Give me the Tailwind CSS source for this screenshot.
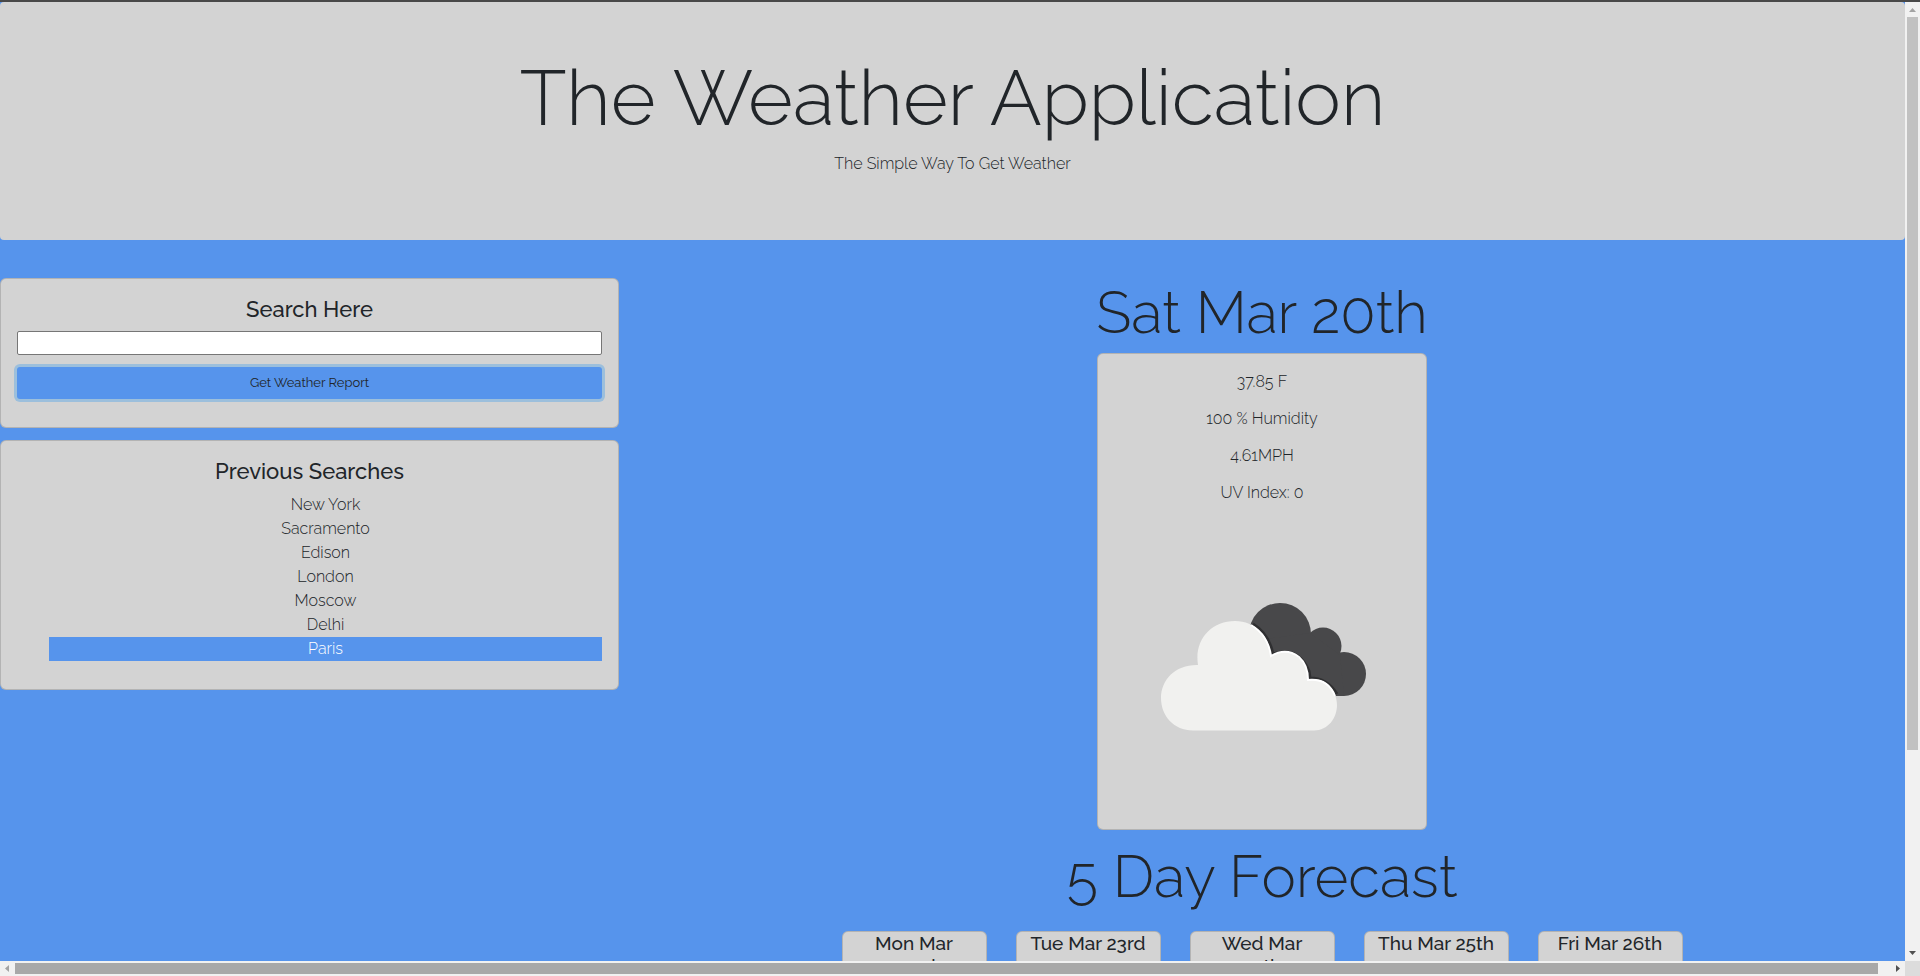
<!DOCTYPE html>
<html lang="en">
<head>
<meta charset="utf-8">
<title>The Weather Application</title>
<script src="https://cdn.jsdelivr.net/npm/@tailwindcss/browser@4"></script>
</head>
<body class="flex h-screen flex-col overflow-hidden bg-[#5694ec] font-['Raleway','Lato',sans-serif] text-base font-light text-[#212529]">
  <div class="flex min-h-0 flex-1">
    <div class="min-w-0 flex-1 overflow-hidden">
      <div class="h-0.5 bg-[#484848]"></div>
      <header class="rounded-sm bg-[#d3d3d3] px-8 pt-12 pb-16 text-center">
        <h1 class="text-[77px] leading-24">The Weather Application</h1>
        <p class="mt-1.5 leading-6">The Simple Way To Get Weather</p>
      </header>
      <div class="mt-[38px] flex items-start">
        <aside class="flex w-[619px] shrink-0 flex-col gap-3 text-center">
          <section class="rounded-md border border-black/15 bg-[#d3d3d3] px-4 pt-4 pb-7">
            <label for="city" class="block text-[22px] leading-7 font-medium">Search Here</label>
            <input id="city" type="text" class="mt-2 block h-6 w-full rounded-xs border border-[#767676] bg-white px-1 outline-none">
            <button type="button" class="mt-3 block h-8 w-full rounded-[3px] bg-[#5694ec] text-[13px] font-normal ring-3 ring-[#9cbfdc]">Get Weather Report</button>
          </section>
          <section class="rounded-md border border-black/15 bg-[#d3d3d3] px-4 pt-4 pb-7">
            <h2 class="text-[22px] leading-7 font-medium">Previous Searches</h2>
            <ul class="mt-2 pl-8 leading-6">
              <li>New York</li>
              <li>Sacramento</li>
              <li>Edison</li>
              <li>London</li>
              <li>Moscow</li>
              <li>Delhi</li>
              <li class="bg-[#5694ec] text-white">Paris</li>
            </ul>
          </section>
        </aside>
        <main class="flex min-w-0 flex-1 flex-col items-center text-center">
          <h2 class="text-[58px] leading-[70px]">Sat Mar 20th</h2>
          <section class="mt-[5px] w-[330px] rounded-md border border-black/15 bg-[#d3d3d3] px-5 pt-4 pb-3">
            <div class="flex flex-col gap-[13px] leading-6">
              <p>37.85 F</p>
              <p>100 % Humidity</p>
              <p>4.61MPH</p>
              <p>UV Index: 0</p>
            </div>
            <svg class="mx-auto mt-5 block h-[292px] w-full" viewBox="1118 525 288 292" role="img" aria-label="Broken clouds">
              <g fill="#48484a">
                <circle cx="1280" cy="634" r="31"/><circle cx="1323" cy="646" r="18.5"/><circle cx="1344" cy="674" r="22"/>
                <path d="M1260 640L1310 633L1340 655L1344 696L1325 696Z"/>
              </g>
              <path fill="none" stroke="#29292b" stroke-width="3" opacity=".8" d="M1253 624Q1269 634 1273 654Q1298 646 1309 671L1310 678Q1327 678 1337 694"/>
              <path fill="#f1f1ef" d="M1193 730.500C1174 730.500 1161 716 1161 698C1161 680 1175 664.500 1198 665C1194 640 1211 621 1235 621C1255 621 1270 637 1271 656C1291 644 1308 660 1308 680C1326 676 1337 691 1337 705C1337 718 1328 730.500 1314 730.500Z"/>
              <path fill="none" stroke="#fff" stroke-width="2" d="M1251 625Q1268 635 1271 656Q1286 647 1299 657Q1308 665 1308 680Q1328 678 1335 696"/>
            </svg>
          </section>
          <h2 class="mt-3 text-[58px] leading-[70px]">5 Day Forecast</h2>
          <div class="mt-[19px] flex gap-[29px] text-[19px] leading-[23px] font-medium">
            <h3 class="w-[145px] rounded-md border border-black/15 bg-[#d3d3d3] px-3 pb-16">Mon Mar 22nd</h3>
            <h3 class="w-[145px] rounded-md border border-black/15 bg-[#d3d3d3] px-3 pb-16">Tue Mar 23rd</h3>
            <h3 class="w-[145px] rounded-md border border-black/15 bg-[#d3d3d3] px-3 pb-16">Wed Mar 24th</h3>
            <h3 class="w-[145px] rounded-md border border-black/15 bg-[#d3d3d3] px-3 pb-16">Thu Mar 25th</h3>
            <h3 class="w-[145px] rounded-md border border-black/15 bg-[#d3d3d3] px-3 pb-16">Fri Mar 26th</h3>
          </div>
        </main>
      </div>
    </div>
    <div class="flex w-[15px] shrink-0 flex-col items-center bg-[#f1f1f1]">
      <div class="h-0.5 w-full bg-[#484848]"></div>
      <svg class="h-[15px] w-[15px] shrink-0" viewBox="0 0 15 15" fill="#a3a3a3"><path d="M4 10L7.500 6L11 10Z"/></svg>
      <div class="w-[11px] flex-[733] bg-[#c1c1c1]"></div>
      <div class="flex-[196]"></div>
      <svg class="h-[15px] w-[15px] shrink-0" viewBox="0 0 15 15" fill="#505050"><path d="M4 5L11 5L7.500 9Z"/></svg>
    </div>
  </div>
  <div class="flex h-[15px] shrink-0 items-center bg-[#f1f1f1]">
    <svg class="h-[15px] w-[15px] shrink-0" viewBox="0 0 15 15" fill="#a3a3a3"><path d="M9 4V11L5 7.500Z"/></svg>
    <div class="h-[11px] flex-1 bg-[#a8a8a8]"></div>
    <svg class="ml-3 h-[15px] w-[15px] shrink-0" viewBox="0 0 15 15" fill="#505050"><path d="M6 4V11L10 7.500Z"/></svg>
    <div class="h-full w-[15px] bg-[#dcdcdc]"></div>
  </div>
</body>
</html>
